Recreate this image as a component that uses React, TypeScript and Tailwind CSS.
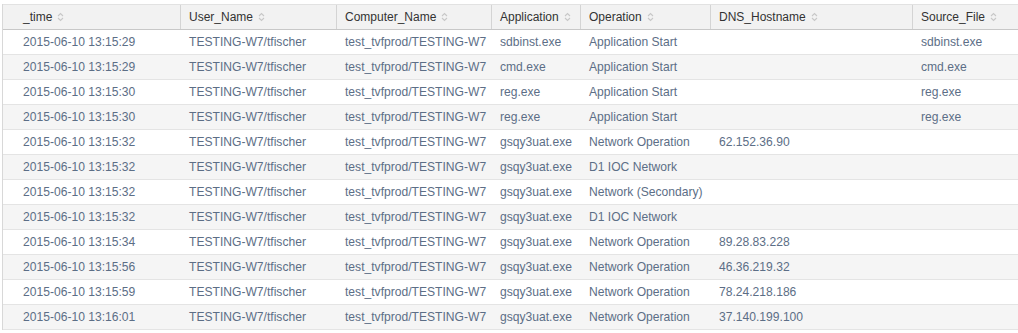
import React from 'react';

type Row = {
  time: string;
  user: string;
  computer: string;
  app: string;
  op: string;
  dns: string;
  src: string;
};

const rows: Row[] = [
  { time: '2015-06-10 13:15:29', user: 'TESTING-W7/tfischer', computer: 'test_tvfprod/TESTING-W7', app: 'sdbinst.exe', op: 'Application Start', dns: '', src: 'sdbinst.exe' },
  { time: '2015-06-10 13:15:29', user: 'TESTING-W7/tfischer', computer: 'test_tvfprod/TESTING-W7', app: 'cmd.exe', op: 'Application Start', dns: '', src: 'cmd.exe' },
  { time: '2015-06-10 13:15:30', user: 'TESTING-W7/tfischer', computer: 'test_tvfprod/TESTING-W7', app: 'reg.exe', op: 'Application Start', dns: '', src: 'reg.exe' },
  { time: '2015-06-10 13:15:30', user: 'TESTING-W7/tfischer', computer: 'test_tvfprod/TESTING-W7', app: 'reg.exe', op: 'Application Start', dns: '', src: 'reg.exe' },
  { time: '2015-06-10 13:15:32', user: 'TESTING-W7/tfischer', computer: 'test_tvfprod/TESTING-W7', app: 'gsqy3uat.exe', op: 'Network Operation', dns: '62.152.36.90', src: '' },
  { time: '2015-06-10 13:15:32', user: 'TESTING-W7/tfischer', computer: 'test_tvfprod/TESTING-W7', app: 'gsqy3uat.exe', op: 'D1 IOC Network', dns: '', src: '' },
  { time: '2015-06-10 13:15:32', user: 'TESTING-W7/tfischer', computer: 'test_tvfprod/TESTING-W7', app: 'gsqy3uat.exe', op: 'Network (Secondary)', dns: '', src: '' },
  { time: '2015-06-10 13:15:32', user: 'TESTING-W7/tfischer', computer: 'test_tvfprod/TESTING-W7', app: 'gsqy3uat.exe', op: 'D1 IOC Network', dns: '', src: '' },
  { time: '2015-06-10 13:15:34', user: 'TESTING-W7/tfischer', computer: 'test_tvfprod/TESTING-W7', app: 'gsqy3uat.exe', op: 'Network Operation', dns: '89.28.83.228', src: '' },
  { time: '2015-06-10 13:15:56', user: 'TESTING-W7/tfischer', computer: 'test_tvfprod/TESTING-W7', app: 'gsqy3uat.exe', op: 'Network Operation', dns: '46.36.219.32', src: '' },
  { time: '2015-06-10 13:15:59', user: 'TESTING-W7/tfischer', computer: 'test_tvfprod/TESTING-W7', app: 'gsqy3uat.exe', op: 'Network Operation', dns: '78.24.218.186', src: '' },
  { time: '2015-06-10 13:16:01', user: 'TESTING-W7/tfischer', computer: 'test_tvfprod/TESTING-W7', app: 'gsqy3uat.exe', op: 'Network Operation', dns: '37.140.199.100', src: '' },
];

const columns: { label: string; key: keyof Row; width: string }[] = [
  { label: '_time', key: 'time', width: 'w-[177px]' },
  { label: 'User_Name', key: 'user', width: 'w-[156px]' },
  { label: 'Computer_Name', key: 'computer', width: 'w-[155px]' },
  { label: 'Application', key: 'app', width: 'w-[89px]' },
  { label: 'Operation', key: 'op', width: 'w-[130px]' },
  { label: 'DNS_Hostname', key: 'dns', width: 'w-[202px]' },
  { label: 'Source_File', key: 'src', width: 'w-[110px]' },
];

const SortIcon = () => (
  <svg width="7" height="10" viewBox="0 0 7 10" className="ml-[5px] shrink-0">
    <path d="M1 4 L3.5 1.5 L6 4" fill="none" stroke="#c8c8c8" strokeWidth="1.1" />
    <path d="M1 6 L3.5 8.5 L6 6" fill="none" stroke="#c8c8c8" strokeWidth="1.1" />
  </svg>
);

export default function App() {
  return (
    <div className="w-[1018px] h-[333px] overflow-hidden bg-white pt-[4px] pl-[2px] font-['Liberation_Sans',Arial,sans-serif]">
      <div className="border-l border-[#d8d8d8]">
        <div className="flex h-[26px] bg-[#f2f2f2] border-t border-[#e2e2e2] border-b border-b-[#c8c8c8] text-[#333] text-[12px]">
          {columns.map((c, i) => (
            <div
              key={c.key}
              className={`${c.width} shrink-0 flex items-center ${i === 0 ? 'pl-[20px]' : 'pl-[8px] border-l border-[#d4d4d4]'}`}
            >
              <span>{c.label}</span>
              <SortIcon />
            </div>
          ))}
        </div>
        {rows.map((r, ri) => (
          <div
            key={ri}
            className={`flex h-[25px] border-b border-[#e4e4e4] text-[#5c6e86] text-[12.1px] ${ri % 2 === 1 ? 'bg-[#f5f5f5]' : 'bg-white'}`}
          >
            {columns.map((c, i) => (
              <div
                key={c.key}
                className={`${c.width} shrink-0 flex items-center whitespace-nowrap ${i === 0 ? 'pl-[20px]' : 'pl-[9px]'}`}
              >
                {r[c.key]}
              </div>
            ))}
          </div>
        ))}
      </div>
    </div>
  );
}
